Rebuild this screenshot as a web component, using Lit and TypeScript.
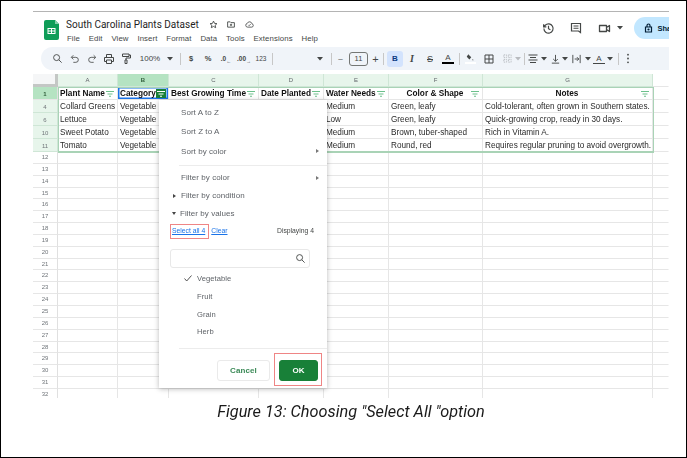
import { LitElement, html, css, svg } from "lit";
import { customElement } from "lit/decorators.js";

const ic = (w: number, h: number, body: unknown, vb = "0 0 24 24") =>
  html`<svg class="ic" width=${w} height=${h} viewBox=${vb} fill="none" stroke="#444746" stroke-width="2">${body}</svg>`;

const caret = html`<svg class="ic" width="6" height="4" viewBox="0 0 6 4"><path d="M0 0h6L3 3.500z" fill="#444746"/></svg>`;
const funnel = (c: string) => html`<svg class="ic" width="8" height="6" viewBox="0 0 8 6"><path d="M0 0h8v1H0zM1.500 2.400h5v1h-5zM3 4.800h2v1H3z" fill=${c}/></svg>`;

const tools: [number, unknown][] = [
  [7, ""],
  [18, ic(11, 11, svg`<circle cx="10" cy="10" r="6.500"/><path d="M15 15l6 6"/>`)],
  [17, ic(10, 10, svg`<path d="M4 8h10a6 6 0 010 12H8M8 3L3 8l5 5"/>`)],
  [17, ic(10, 10, svg`<path d="M20 8H10a6 6 0 000 12h6M16 3l5 5-5 5"/>`)],
  [17, ic(12, 12, svg`<path d="M7 8V3h10v5M7 17H3V9h18v8h-4M7 14h10v7H7z"/>`)],
  [18, ic(12, 13, svg`<path d="M5 3h13v5H5zM18 5h3v6h-9v4M10 15h4v7h-4z"/>`)],
  [30, html`<span class="tx">100%</span>`],
  [10, caret],
  [10, html`<i class="div"></i>`],
  [12, html`<span class="tx b">$</span>`],
  [22, html`<span class="tx b">%</span>`],
  [14, html`<span class="tx b tiny">.0<sub>←</sub></span>`],
  [22, html`<span class="tx b tiny">.00<sub>→</sub></span>`],
  [12, html`<span class="tx tiny">123</span>`],
  [10, html`<i class="div"></i>`],
  [49, html`<span class="end">${caret}</span>`],
  [10, html`<i class="div"></i>`],
  [9, html`<span class="tx">–</span>`],
  [27, html`<span class="size">11</span>`],
  [7, html`<span class="tx big">+</span>`],
  [8, html`<i class="div"></i>`],
  [16, html`<span class="bold">B</span>`],
  [18, html`<span class="tx it">I</span>`],
  [18, html`<span class="tx strike">S</span>`],
  [18, html`<span class="tx under">A</span>`],
  [4, html`<i class="div"></i>`],
  [18, html`<span class="fill">${ic(11, 9, svg`<path d="M6 3l8 8-5 6-7-7zM18 15l2 4h-3z" fill="#444746" stroke="none"/>`)}</span>`],
  [20, ic(12, 12, svg`<path d="M4 4h16v16H4zM12 4v16M4 12h16"/>`)],
  [16, ic(11, 11, svg`<path stroke="#b8bbbf" d="M4 4h6v6H4zM14 4h6v6h-6zM4 14h6v6H4zM14 14h6v6h-6z" stroke-dasharray="3 2"/>`)],
  [6, html`<svg class="ic" width="6" height="4" viewBox="0 0 6 4"><path d="M0 0h6L3 3.500z" fill="#b8bbbf"/></svg>`],
  [6, html`<i class="div"></i>`],
  [12, ic(12, 12, svg`<path d="M3 4h18M6 9h12M3 14h18M6 19h12"/>`)],
  [10, caret],
  [12, ic(11, 12, svg`<path d="M4 21h16M12 3v14M7 12l5 5 5-5"/>`)],
  [8, caret],
  [14, ic(11, 12, svg`<path d="M4 3v18M20 3v18M8 12h9M13 8l4 4-4 4"/>`)],
  [10, caret],
  [12, html`<span class="tx under thin">A</span>`],
  [10, caret],
  [6, html`<i class="div"></i>`],
  [14, ic(4, 11, svg`<circle cx="2" cy="3" r="1.600" fill="#444746" stroke="none"/><circle cx="2" cy="10" r="1.600" fill="#444746" stroke="none"/><circle cx="2" cy="17" r="1.600" fill="#444746" stroke="none"/>`, "0 0 4 20")],
];

const COLS = ["A", "B", "C", "D", "E", "F", "G"];
const HEAD: [string, string][] = [
  ["Plant Name", "l"], ["Category", "l"], ["Best Growing Time", "l"], ["Date Planted", "l"],
  ["Water Needs", "l"], ["Color & Shape", "c"], ["Notes", "c"],
];
const DATA: [string, string[]][] = [
  ["4", ["Collard Greens", "Vegetable", "", "", "Medium", "Green, leafy", "Cold-tolerant, often grown in Southern states."]],
  ["6", ["Lettuce", "Vegetable", "", "", "Low", "Green, leafy", "Quick-growing crop, ready in 30 days."]],
  ["10", ["Sweet Potato", "Vegetable", "", "", "Medium", "Brown, tuber-shaped", "Rich in Vitamin A."]],
  ["11", ["Tomato", "Vegetable", "", "", "Medium", "Round, red", "Requires regular pruning to avoid overgrowth."]],
];
const EMPTY = Array.from({ length: 21 }, (_, i) => String(i + 12));

@customElement("app-root")
export class AppRoot extends LitElement {
  static styles = css`
    :host { display: block; width: 687px; height: 458px; box-sizing: border-box; border: 1px solid #000; background: #fff; overflow: hidden; font-family: "Liberation Sans", Arial, sans-serif; color: #1f1f1f; }
    .page { display: flex; flex-direction: column; padding: 10px 0 0 32px; filter: blur(0.4px); }
    .win { width: 636px; border-top: 1px solid #b4b4b4; background: #fff; overflow: hidden; }
    .ic { display: block; flex: none; }

    .hdr { display: flex; height: 35px; background: #fff; }
    .logo { margin: 8px 7px 0 11px; }
    .titles { flex: 1; padding-top: 6px; }
    .tline { display: flex; align-items: center; font: 10px/13px Roboto, sans-serif; color: #1f1f1f; }
    .tline .ics { display: flex; gap: 8px; margin-left: 10px; align-items: center; }
    .menu { display: flex; gap: 8.800px; margin-top: 2px; font-size: 7.800px; line-height: 11px; color: #444746; letter-spacing: .1px; padding-left: 1px; }
    .right { display: flex; align-items: center; margin-top: 5px; height: 22px; }
    .right .hs { margin-right: 14.500px; }
    .right .cm { margin-right: 16.500px; }
    .right .mt { margin-right: 5.500px; }
    .right .car { margin-right: 11.500px; }
    .share { display: flex; align-items: center; gap: 4.500px; width: 60px; height: 22px; flex: none; margin-right: -25px; padding-left: 10px; box-sizing: border-box; border-radius: 11px; background: #c2e7ff; font-size: 7.500px; font-weight: 700; color: #001d35; }

    .tb { display: flex; align-items: center; height: 23px; margin-left: 8px; border-radius: 12px 0 0 12px; background: #f0f4f9; overflow: hidden; }
    .slot { display: flex; align-items: center; justify-content: center; flex: none; height: 23px; }
    .tx { font-size: 8px; color: #444746; line-height: 10px; }
    .b { font-weight: 700; font-size: 7.500px; }
    .tiny { font-size: 6.500px; white-space: nowrap; }
    .tiny sub { font-size: 5px; vertical-align: -2px; line-height: 0; }
    .big { font-size: 11px; }
    .div { display: block; width: 1px; height: 12px; background: #c7c7c7; }
    .end { display: flex; justify-content: flex-end; width: 100%; padding-right: 3px; box-sizing: border-box; }
    .size { width: 19px; height: 14px; box-sizing: border-box; border: 1px solid #747775; border-radius: 3px; font-size: 7.500px; line-height: 12px; text-align: center; color: #444746; }
    .bold { width: 16px; height: 16px; border-radius: 3px; background: #d3e3fd; font-size: 8px; font-weight: 700; line-height: 16px; text-align: center; color: #0b3a82; }
    .it { font-family: "Liberation Serif", serif; font-style: italic; font-weight: 700; font-size: 10px; }
    .strike { text-decoration: line-through; font-size: 9px; }
    .under { border-bottom: 2px solid #000; padding: 0 3px; line-height: 9px; }
    .thin { border-bottom: 1px solid #444746; }
    .fill { display: block; border-bottom: 2px solid #fff; }

    .gridwrap { position: relative; height: 324px; margin-top: 4px; overflow: hidden; background: #fff; }
    .grid { display: grid; grid-template-columns: 25px 60px 51px 90px 65px 65px 94px 170px 16px; grid-template-rows: 13px 13px repeat(4, 13px) repeat(21, 11.850px); }
    .c { box-sizing: border-box; border-right: 1px solid #e6e6e6; border-bottom: 1px solid #e6e6e6; font-size: 8.200px; line-height: 14px; padding: 0 2px; white-space: nowrap; overflow: hidden; color: #2a2a2a; }
    .ch { background: #e7f5eb; border-color: #cfe6d6; font-size: 6px; line-height: 13px; text-align: center; color: #5f6368; }
    .ch.sel { background: #b5e3c2; color: #2f5d3a; font-weight: 700; }
    .corner { background: #f5f6f7; border-right: 3px solid #c4c7c5; border-bottom: 3px solid #c4c7c5; }
    .rh { background: #fff; padding: 0; font-size: 6px; text-align: center; color: #70757a; border-right: 1px solid #e0e0e0; }
    .rh.e { line-height: 11px; }
    .rh.on { background: #e7f5eb; border-color: #cfe6d6; }
    .rh.sel { background: #b5e3c2; color: #2f5d3a; font-weight: 700; }
    .h { display: flex; align-items: center; justify-content: space-between; font-weight: 700; font-size: 8.260px; color: #111; padding: 1px 3px 0 2px; }
    .h.ctr { justify-content: center; position: relative; }
    .h.ctr .ic { position: absolute; right: 3px; top: 4px; }
    .active { overflow: visible; box-shadow: inset 0 0 0 1.500px #1a73e8; padding-right: 2px; }
    .fbtn { display: flex; align-items: center; justify-content: center; width: 10px; height: 9px; background: #188038; }
    .range { position: absolute; left: 25px; top: 13px; width: 596px; height: 66px; box-sizing: border-box; border: 1px solid #a9d3b6; border-bottom-width: 2px; pointer-events: none; }
    .none { border-right-color: transparent; }

    .pop { position: absolute; left: 126px; top: 26px; width: 168px; height: 288px; box-sizing: border-box; padding-top: 3px; background: #fff; box-shadow: 0 1px 5px rgba(0,0,0,.28); font-size: 8px; color: #5f6368; letter-spacing: .05px; }
    .it2 { display: flex; align-items: center; justify-content: space-between; height: 19.300px; padding: 0 8px 0 22px; box-sizing: border-box; }
    .it2.f { height: 18px; }
    .it2.exp { height: 18px; padding-left: 14px; justify-content: flex-start; gap: 5px; }
    .tri { width: 0; height: 0; border-left: 3px solid #444; border-top: 2.500px solid transparent; border-bottom: 2.500px solid transparent; }
    .tri.g { border-left-color: #777; }
    .tri.dn { border-top: 3px solid #444; border-bottom: 0; border-left: 2.500px solid transparent; border-right: 2.500px solid transparent; margin-left: -1px; margin-right: -1px; }
    .sep { height: 1px; background: #ececec; margin: 4px 0 3px 20px; }
    .sel-row { display: flex; align-items: center; height: 14px; padding: 0 13px 0 13px; font-size: 6.800px; letter-spacing: 0; margin-top: 1px; position: relative; }
    .sel-row a { color: #1a73e8; text-decoration: underline; }
    .sel-row .all { margin-right: 6px; }
    .sel-row .disp { margin-left: auto; color: #444746; }
    .redbox { position: absolute; box-sizing: border-box; border: 1px solid #ef8585; }
    .rb1 { left: 11px; top: 0; width: 39px; height: 15px; }
    .srch { display: flex; align-items: center; justify-content: flex-end; height: 19px; margin: 11px 17px 2px 11px; padding-right: 3px; box-sizing: border-box; border: 1px solid #e8e8e8; border-radius: 3px; }
    .val { display: flex; align-items: center; height: 17.700px; padding-left: 38px; position: relative; font-size: 7.600px; color: #5f6368; }
    .val .ic { position: absolute; left: 25px; top: 5px; }
    .sep2 { height: 1px; background: #ececec; margin: 7px 0 0 20px; }
    .btns { display: flex; justify-content: flex-end; gap: 9px; padding: 11px 9px 0 0; position: relative; }
    .btn { width: 53px; height: 21px; box-sizing: border-box; border: 1px solid #eaeaea; border-radius: 3px; text-align: center; font-weight: 700; line-height: 19px; color: #3b8a57; letter-spacing: .1px; }
    .ok { width: 39px; background: #188038; border-color: #188038; color: #fff; }
    .rb2 { right: 5px; top: 4px; width: 48px; height: 33px; }

    .cap { width: 636px; margin-top: 5px; text-align: center; font: italic 16.300px/18px Roboto, sans-serif; color: #1a1a1a; }
  `;

  private col(name: string) {
    return html`<div class="c ch ${name === "B" ? "sel" : ""}">${name}</div>`;
  }

  private head(i: number) {
    const [label, align] = HEAD[i];
    if (i === 1) {
      return html`<div class="c h active">${label}<span class="fbtn">${funnel("#fff")}</span></div>`;
    }
    return html`<div class="c h ${align === "c" ? "ctr" : ""}">${label}${funnel("#6cc08b")}</div>`;
  }

  render() {
    return html`<div class="page">
      <div class="win">
        <div class="hdr">
          <svg class="ic logo" width="15" height="20" viewBox="0 0 15 20"><path d="M2 0h9l4 4v14a2 2 0 01-2 2H2a2 2 0 01-2-2V2a2 2 0 012-2z" fill="#0f9d58"/><path d="M11 0l4 4h-4z" fill="#87ceac"/><path d="M3.500 8h8v6h-8zM4.500 9v1.400h2.500V9zm3.500 0v1.400h2.500V9zm-3.500 2.400V13h2.500v-1.600zm3.500 0V13h2.500v-1.600z" fill="#fff" fill-rule="evenodd"/></svg>
          <div class="titles">
            <div class="tline">South Carolina Plants Dataset
              <span class="ics">
                ${ic(9, 9, svg`<path stroke-width="2.400" d="M12 3l2.800 6 6.400.7-4.800 4.300 1.400 6.500L12 17.200 6.200 20.500 7.600 14 2.800 9.700 9.200 9z"/>`)}
                ${ic(10, 9, svg`<path stroke-width="2.400" d="M3 5h7l2 2h9v12H3zM12 10v6M9 13h6"/>`)}
                ${ic(11, 9, svg`<path stroke-width="2.200" d="M7 19a5 5 0 01-1-9.900 6.500 6.500 0 0112.500 1A4.500 4.500 0 0118 19zM9 13l2 2 4-4"/>`)}
              </span>
            </div>
            <div class="menu"><span>File</span><span>Edit</span><span>View</span><span>Insert</span><span>Format</span><span>Data</span><span>Tools</span><span>Extensions</span><span>Help</span></div>
          </div>
          <div class="right">
            <svg class="ic hs" width="13" height="13" viewBox="0 0 24 24" fill="none" stroke="#444746" stroke-width="2.200"><path d="M3.500 12a8.500 8.500 0 102.500-6L3 9M3 4v5h5M12 7v5.500l3.500 2"/></svg>
            <svg class="ic cm" width="12" height="12" viewBox="0 0 24 24" fill="none" stroke="#444746" stroke-width="2.400"><path d="M3 3h18v18l-4-3H3zM7 8h10M7 12.500h10"/></svg>
            <svg class="ic mt" width="13" height="11" viewBox="0 0 26 22" fill="none" stroke="#444746" stroke-width="2.600"><path d="M3 5h14v12H3zM17 9l6-4v12l-6-4" stroke-linejoin="round"/></svg>
            <svg class="ic car" width="6" height="4" viewBox="0 0 6 4"><path d="M0 0h6L3 3.500z" fill="#444746"/></svg>
            <div class="share">
              <svg class="ic" width="9" height="10" viewBox="0 0 18 20" fill="none" stroke="#001d35" stroke-width="2.400"><path d="M3 8h12v10H3zM6 8V5a3 3 0 016 0v3"/><circle cx="9" cy="13" r="1" fill="#001d35"/></svg>
              <span>Share</span>
            </div>
          </div>
        </div>
        <div class="tb">
          ${tools.map(([w, c]) => html`<div class="slot" style="width:${w}px">${c}</div>`)}
        </div>
        <div class="gridwrap">
          <div class="grid">
            <div class="c corner"></div>
            ${COLS.map((n) => this.col(n))}
            <div class="c none"></div>
            <div class="c rh sel">1</div>
            ${HEAD.map((_, i) => this.head(i))}
            <div class="c none"></div>
            ${DATA.map(([n, cells]) => html`
              <div class="c rh on">${n}</div>
              ${cells.map((t) => html`<div class="c">${t}</div>`)}
              <div class="c none"></div>`)}
            ${EMPTY.map((n) => html`
              <div class="c rh e">${n}</div>
              ${COLS.map(() => html`<div class="c"></div>`)}
              <div class="c none"></div>`)}
          </div>
          <div class="range"></div>
          <div class="pop">
            <div class="it2">Sort A to Z</div>
            <div class="it2">Sort Z to A</div>
            <div class="it2">Sort by color<i class="tri g"></i></div>
            <div class="sep"></div>
            <div class="it2 f">Filter by color<i class="tri g"></i></div>
            <div class="it2 exp"><i class="tri"></i>Filter by condition</div>
            <div class="it2 exp"><i class="tri dn"></i>Filter by values</div>
            <div class="sel-row">
              <a class="all">Select all 4</a><a>Clear</a><span class="disp">Displaying 4</span>
              <div class="redbox rb1"></div>
            </div>
            <div class="srch">${ic(11, 11, svg`<circle cx="10" cy="10" r="6.500"/><path d="M15 15l6 6"/>`)}</div>
            <div class="val"><svg class="ic" width="8" height="7" viewBox="0 0 8 7" fill="none" stroke="#555" stroke-width="1"><path d="M.5 3.500l2.200 2.500L7.500.5"/></svg>Vegetable</div>
            <div class="val">Fruit</div>
            <div class="val">Grain</div>
            <div class="val">Herb</div>
            <div class="sep2"></div>
            <div class="btns">
              <div class="btn">Cancel</div>
              <div class="btn ok">OK</div>
              <div class="redbox rb2"></div>
            </div>
          </div>
        </div>
      </div>
      <div class="cap">Figure 13: Choosing "Select All "option</div>
    </div>`;
  }
}
